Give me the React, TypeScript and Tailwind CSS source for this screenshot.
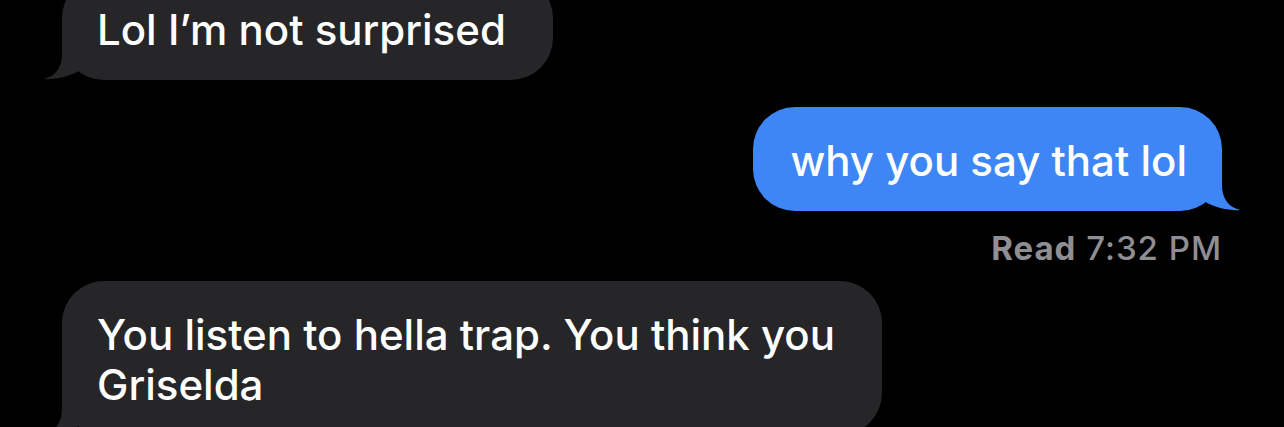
import React from 'react';

const Tail: React.FC<{ color: string; side: 'left' | 'right' }> = ({ color, side }) => (
  <svg
    width="90"
    height="60"
    viewBox="0 0 90 60"
    className={
      side === 'right'
        ? 'absolute bottom-0 right-[-30px] pointer-events-none'
        : 'absolute bottom-0 left-[-30px] pointer-events-none -scale-x-100'
    }
  >
    <path
      d="M0 0 L60 0 L60 34 C60 47 66 56 78 59 C70 60 52 57 42 50 C35 56 22 60 0 60 Z"
      fill={color}
    />
  </svg>
);

const Received: React.FC<{ text: React.ReactNode; className?: string }> = ({ text, className = '' }) => (
  <div className={`relative self-start rounded-[42px] bg-[#262628] pl-[35px] pr-[47px] pt-[29px] pb-[25px] ${className}`}>
    <Tail color="#262628" side="left" />
    <p className="relative text-[42px] leading-[50px] font-medium text-white">{text}</p>
  </div>
);

export default function App() {
  return (
    <div className="h-[427px] w-[1284px] overflow-hidden bg-black font-['Inter','Liberation_Sans',sans-serif]">
      <div className="flex flex-col px-[62px]">
        <Received text="Lol I’m not surprised" className="-mt-[24px]" />

        <div className="relative mt-[27px] self-end rounded-[42px] bg-[#3e86f5] pl-[37px] pr-[35px] pt-[29px] pb-[25px]">
          <Tail color="#3e86f5" side="right" />
          <p className="relative text-[42px] leading-[50px] font-medium text-white">why you say that lol</p>
        </div>

        <div className="mt-[18px] self-end text-[33px] leading-[38px] font-medium tracking-[1px] text-[#8e8e93]">
          <span className="font-bold">Read</span> 7:32 PM
        </div>

        <Received
          text={
            <>
              You listen to hella trap. You think you
              <br />
              Griselda
            </>
          }
          className="mt-[14px]"
        />
      </div>
    </div>
  );
}
